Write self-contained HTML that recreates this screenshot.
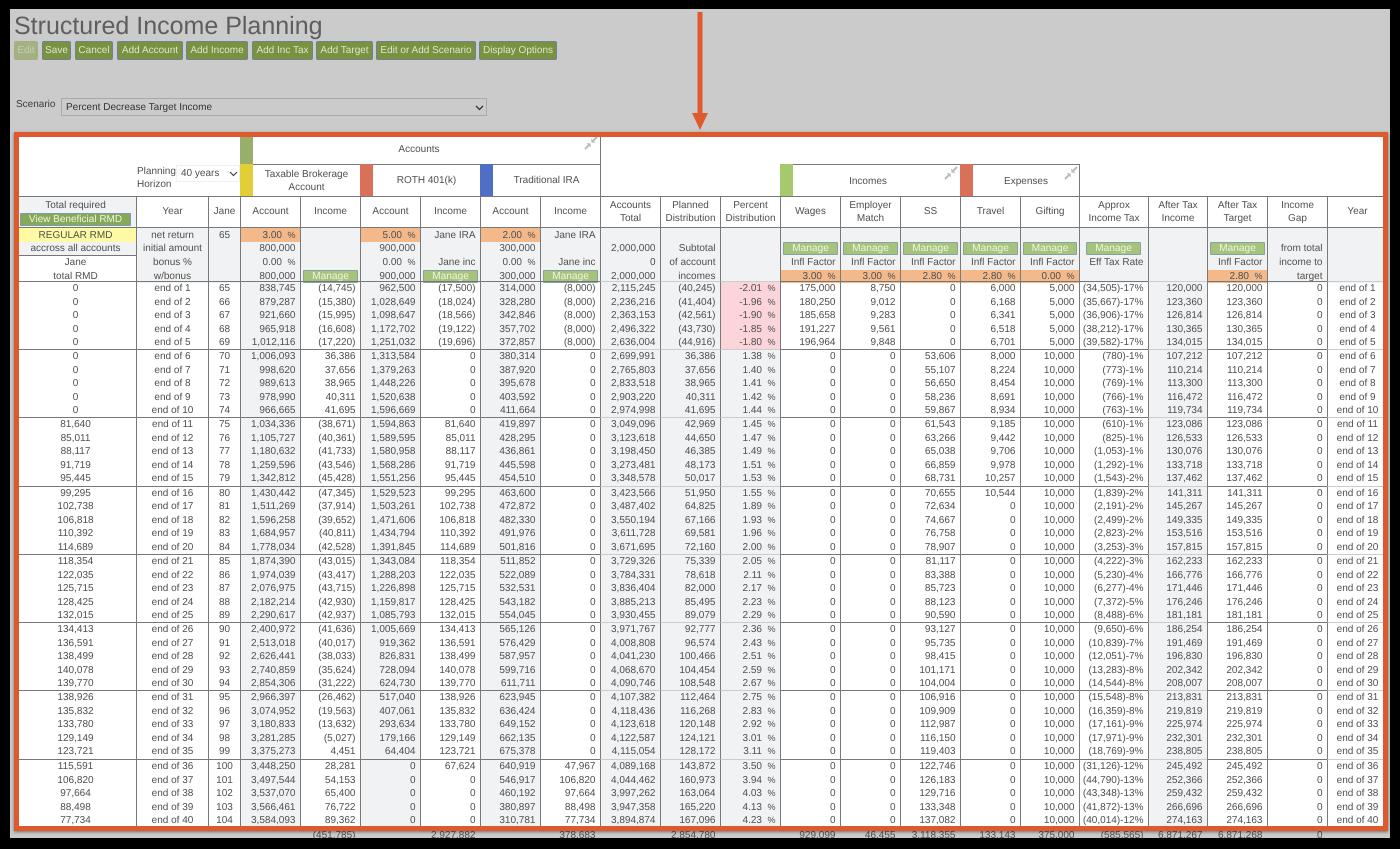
<!DOCTYPE html>
<html><head><meta charset="utf-8"><title>Structured Income Planning</title>
<style>
html,body{margin:0;padding:0;background:#000;width:1400px;height:849px;overflow:hidden}
body{position:relative;font-family:"Liberation Sans",sans-serif;font-size:10px;color:#4f4f4f;text-rendering:geometricPrecision}
.a{position:absolute}
#page{position:absolute;left:0;top:0;width:1400px;height:849px;background:#cbcbcb;filter:blur(.25px)}
#frame{position:absolute;left:0;top:0;width:1400px;height:849px;box-sizing:border-box;border-style:solid;border-color:#000;border-width:9px 10px 11px 10px;z-index:9}
h1{position:absolute;left:14px;top:11px;margin:0;font-weight:400;font-size:25px;line-height:30px;color:#5e5e5e;white-space:nowrap}
.b{position:absolute;top:41px;height:19px;box-sizing:border-box;background:#78923f;border:1px solid #6d8296;border-radius:2px;color:#dfe5cf;line-height:18px;text-align:center;white-space:nowrap}
.b.d{background:#a3b084;border-color:#a3b084;color:#c7d0b0}
#white{position:absolute;left:15px;top:133px;width:1372px;height:697px;background:#fff}
table{position:absolute;left:15px;width:1372px;table-layout:fixed;border-collapse:separate;border-spacing:0}
td{box-sizing:border-box;padding:0 4.5px 0 2px;height:13.6px;line-height:13.6px;white-space:nowrap;overflow:hidden;text-align:right;border-left:1px solid #7a7a7a}
td:nth-child(1){width:121px;border-left:0}
td:nth-child(2){width:72px}td:nth-child(3){width:32px}
td:nth-child(n+4){width:60px}
td:nth-child(17){width:59px}td:nth-child(18){width:69px}td:nth-child(19){width:59px}
td:nth-child(1),td:nth-child(2),td:nth-child(3),td:nth-child(22){text-align:center;padding:0}
td:nth-child(4),td:nth-child(6),td:nth-child(8),td:nth-child(10),td:nth-child(11),td:nth-child(12),td:nth-child(19){background:#f1f2f4}
td:nth-child(1){padding-right:0}
.g tr:first-child td{height:14.4px;border-top:1px solid #777}
.g tr:first-child td:nth-child(10),.g tr:first-child td:nth-child(11),.g tr:first-child td:nth-child(12),.g tr:first-child td:nth-child(19),.g tr:first-child td:nth-child(22){border-top-color:#ccc}
.p td:nth-child(12){background:#fbd5da}
i{font-style:normal;font-size:9px;margin-left:5.5px}
.c td{height:32px;line-height:12.5px;text-align:center;padding:1px 0 0;background:#fff;border-top:1px solid #777;border-bottom:1px solid #777;white-space:normal}
.h td{background:#f1f2f4;height:13px;line-height:12px;padding-top:1px}
.h tr:nth-child(3) td{height:14px;line-height:14px;padding-top:0}
.h tr:nth-child(4) td{line-height:13px;padding-top:0}
.h td.o{background:#f3b98a}
.h td.y{background:#fdfaa3}
.h td.w{background:#fff}
.h td.t{border-top:1px solid #777}
.h td.n,.h tr td.n{padding:0}
.m{box-sizing:border-box;height:13px;line-height:12px;margin:0 2px;background:#a5c37a;border:1px solid #88a2a6;border-radius:1px;color:#eff5e3;text-align:center;font-size:10.2px}
.s td{border:0!important;background:none!important;height:14px;line-height:14px}
.l{position:absolute;background:#777}
.t{position:absolute;text-align:center;line-height:12.5px}
#box{position:absolute;left:14px;top:132px;width:1374px;height:699px;box-sizing:border-box;border:5px solid #de5a2e;box-shadow:0 1px 3px rgba(0,0,0,.45);z-index:5}
</style></head><body>
<div id="page">
<h1>Structured Income Planning</h1>
<div class="b d" style="left:14px;width:24px">Edit</div>
<div class="b" style="left:42px;width:29px">Save</div>
<div class="b" style="left:75px;width:38px">Cancel</div>
<div class="b" style="left:117px;width:66px">Add Account</div>
<div class="b" style="left:186px;width:62px">Add Income</div>
<div class="b" style="left:252px;width:61px">Add Inc Tax</div>
<div class="b" style="left:316px;width:57px">Add Target</div>
<div class="b" style="left:376px;width:100px">Edit or Add Scenario</div>
<div class="b" style="left:479px;width:78px">Display Options</div>

<div class="a" style="left:16px;top:98px;line-height:13px;color:#3a3a3a">Scenario</div>
<div class="a" style="left:61px;top:98px;width:426px;height:18px;box-sizing:border-box;border:1px solid #aaa;line-height:17px;padding-left:4px;color:#333">Percent Decrease Target Income
<svg class="a" style="left:413px;top:6px" width="9" height="6" viewBox="0 0 9 6"><path d="M1 1l3.5 3.5L8 1" fill="none" stroke="#333" stroke-width="1.3"/></svg></div>

<svg class="a" style="left:685px;top:8px;z-index:6" width="30" height="124" viewBox="0 0 30 124"><path d="M12.5 4h5v102h-5z" fill="#de5a2e"/><path d="M7 105h16l-8 17z" fill="#de5a2e"/></svg>

<div id="white"></div>

<!-- top header -->
<div class="l" style="left:253px;top:164px;width:347px;height:1px"></div>
<div class="l" style="left:600px;top:137px;width:1px;height:59px"></div>
<div class="l" style="left:780px;top:164px;width:299px;height:1px"></div>
<div class="l" style="left:1079px;top:164px;width:1px;height:32px"></div>
<div class="a" style="left:240px;top:137px;width:13px;height:27px;background:#9aae6b"></div>
<div class="a" style="left:240px;top:164px;width:13px;height:32px;background:#e2cf37"></div>
<div class="a" style="left:360px;top:164px;width:13px;height:32px;background:#d9705a"></div>
<div class="a" style="left:480px;top:164px;width:13px;height:32px;background:#4f6fc4"></div>
<div class="a" style="left:780px;top:164px;width:13px;height:32px;background:#a5c96c"></div>
<div class="a" style="left:960px;top:164px;width:13px;height:32px;background:#d9705a"></div>
<div class="t" style="left:253px;top:144px;width:332px">Accounts</div>
<div class="t" style="left:253px;top:169px;width:107px">Taxable Brokerage<br>Account</div>
<div class="t" style="left:373px;top:175px;width:107px">ROTH 401(k)</div>
<div class="t" style="left:493px;top:175px;width:107px">Traditional IRA</div>
<div class="t" style="left:793px;top:176px;width:150px">Incomes</div>
<div class="t" style="left:973px;top:176px;width:106px">Expenses</div>
<div class="t" style="left:137px;top:165px;text-align:left;width:40px;padding-top:1px">Planning<br>Horizon</div>
<div class="a" style="left:176px;top:165px;width:64px;height:17px;box-sizing:border-box;border:1px solid #f0f0f0;background:#fff;line-height:15px;padding-left:4px">40 years
<svg class="a" style="left:52px;top:5px" width="9" height="6" viewBox="0 0 9 6"><path d="M1 1l3.500 3.500L8 1" fill="none" stroke="#444" stroke-width="1.2"/></svg></div>
<svg class="a" style="left:584px;top:136px" width="14" height="14" viewBox="0 0 14 14"><path d="M1 13l4.500-4.500M13 1L8.500 5.500" stroke="#bbb" stroke-width="2" fill="none"/><path d="M6.500 7.500L2.500 7l4.500 4.500zM7.500 6.500l4 .5L7 2.500z" fill="#bbb"/></svg>
<svg class="a" style="left:944px;top:166px" width="14" height="14" viewBox="0 0 14 14"><path d="M1 13l4.500-4.500M13 1L8.500 5.500" stroke="#bbb" stroke-width="2" fill="none"/><path d="M6.500 7.500L2.500 7l4.500 4.500zM7.500 6.500l4 .5L7 2.500z" fill="#bbb"/></svg>
<svg class="a" style="left:1064px;top:166px" width="14" height="14" viewBox="0 0 14 14"><path d="M1 13l4.500-4.500M13 1L8.500 5.500" stroke="#bbb" stroke-width="2" fill="none"/><path d="M6.500 7.500L2.500 7l4.500 4.500zM7.500 6.500l4 .5L7 2.500z" fill="#bbb"/></svg>

<!-- column headings -->
<table class="c" style="top:196px"><tr><td><td>Year<td>Jane<td>Account<td>Income<td>Account<td>Income<td>Account<td>Income<td>Accounts<br>Total<td>Planned<br>Distribution<td>Percent<br>Distribution<td>Wages<td>Employer<br>Match<td>SS<td>Travel<td>Gifting<td>Approx<br>Income Tax<td>After Tax<br>Income<td>After Tax<br>Target<td>Income<br>Gap<td>Year</tr></table>
<div class="a" style="left:15px;top:197px;width:121px;height:16px;background:#f1f2f4;text-align:center;line-height:17px">Total required</div>
<div class="a" style="left:15px;top:213px;width:121px;height:14px;background:#f1f2f4"></div>
<div class="a" style="left:20px;top:213px;width:111px;height:13px;box-sizing:border-box;background:#86a957;border:1px solid #7d9ab0;color:#eff5e3;text-align:center;line-height:12px;font-size:10px;border-radius:1px">View Beneficial RMD</div>

<!-- parameter rows -->
<table class="h" style="top:228px">
<tr><td class="y">REGULAR RMD<td>net return<td>65<td class="o">3.00<i>%</i><td><td class="o">5.00<i>%</i><td>Jane IRA<td class="o">2.00<i>%</i><td>Jane IRA<td><td><td><td><td><td><td><td><td><td><td><td><td></tr>
<tr><td>accross all accounts<td>initial amount<td><td>800,000<td><td>900,000<td><td>300,000<td><td>2,000,000<td>Subtotal<td><td class="n"><div class="m">Manage</div><td class="n"><div class="m">Manage</div><td class="n"><div class="m">Manage</div><td class="n"><div class="m">Manage</div><td class="n"><div class="m">Manage</div><td class="n"><div class="m" style="margin:0 7px 0 6px">Manage</div><td><td class="n"><div class="m">Manage</div><td>from total<td></tr>
<tr><td class="w t">Jane<td>bonus %<td><td>0.00<i>%</i><td><td>0.00<i>%</i><td>Jane inc<td>0.00<i>%</i><td>Jane inc<td>0<td>of account<td><td>Infl Factor<td>Infl Factor<td>Infl Factor<td>Infl Factor<td>Infl Factor<td>Eff Tax Rate<td><td>Infl Factor<td>income to<td></tr>
<tr><td class="w">total RMD<td>w/bonus<td><td>800,000<td class="n"><div class="m">Manage</div><td>900,000<td class="n"><div class="m">Manage</div><td>300,000<td class="n"><div class="m">Manage</div><td>2,000,000<td>incomes<td><td class="o">3.00<i>%</i><td class="o">3.00<i>%</i><td class="o">2.80<i>%</i><td class="o">2.80<i>%</i><td class="o">0.00<i>%</i><td><td><td class="o">2.80<i>%</i><td>target<td></tr>
</table>

<!-- data -->
<table class="g p" style="top:281px">
<tr><td>0<td>end of 1<td>65<td>838,745<td>(14,745)<td>962,500<td>(17,500)<td>314,000<td>(8,000)<td>2,115,245<td>(40,245)<td>-2.01<i>%</i><td>175,000<td>8,750<td>0<td>6,000<td>5,000<td>(34,505)-17%<td>120,000<td>120,000<td>0<td>end of 1</tr>
<tr><td>0<td>end of 2<td>66<td>879,287<td>(15,380)<td>1,028,649<td>(18,024)<td>328,280<td>(8,000)<td>2,236,216<td>(41,404)<td>-1.96<i>%</i><td>180,250<td>9,012<td>0<td>6,168<td>5,000<td>(35,667)-17%<td>123,360<td>123,360<td>0<td>end of 2</tr>
<tr><td>0<td>end of 3<td>67<td>921,660<td>(15,995)<td>1,098,647<td>(18,566)<td>342,846<td>(8,000)<td>2,363,153<td>(42,561)<td>-1.90<i>%</i><td>185,658<td>9,283<td>0<td>6,341<td>5,000<td>(36,906)-17%<td>126,814<td>126,814<td>0<td>end of 3</tr>
<tr><td>0<td>end of 4<td>68<td>965,918<td>(16,608)<td>1,172,702<td>(19,122)<td>357,702<td>(8,000)<td>2,496,322<td>(43,730)<td>-1.85<i>%</i><td>191,227<td>9,561<td>0<td>6,518<td>5,000<td>(38,212)-17%<td>130,365<td>130,365<td>0<td>end of 4</tr>
<tr><td>0<td>end of 5<td>69<td>1,012,116<td>(17,220)<td>1,251,032<td>(19,696)<td>372,857<td>(8,000)<td>2,636,004<td>(44,916)<td>-1.80<i>%</i><td>196,964<td>9,848<td>0<td>6,701<td>5,000<td>(39,582)-17%<td>134,015<td>134,015<td>0<td>end of 5</tr>
</table>
<table class="g" style="top:349px">
<tr><td>0<td>end of 6<td>70<td>1,006,093<td>36,386<td>1,313,584<td>0<td>380,314<td>0<td>2,699,991<td>36,386<td>1.38<i>%</i><td>0<td>0<td>53,606<td>8,000<td>10,000<td>(780)-1%<td>107,212<td>107,212<td>0<td>end of 6</tr>
<tr><td>0<td>end of 7<td>71<td>998,620<td>37,656<td>1,379,263<td>0<td>387,920<td>0<td>2,765,803<td>37,656<td>1.40<i>%</i><td>0<td>0<td>55,107<td>8,224<td>10,000<td>(773)-1%<td>110,214<td>110,214<td>0<td>end of 7</tr>
<tr><td>0<td>end of 8<td>72<td>989,613<td>38,965<td>1,448,226<td>0<td>395,678<td>0<td>2,833,518<td>38,965<td>1.41<i>%</i><td>0<td>0<td>56,650<td>8,454<td>10,000<td>(769)-1%<td>113,300<td>113,300<td>0<td>end of 8</tr>
<tr><td>0<td>end of 9<td>73<td>978,990<td>40,311<td>1,520,638<td>0<td>403,592<td>0<td>2,903,220<td>40,311<td>1.42<i>%</i><td>0<td>0<td>58,236<td>8,691<td>10,000<td>(766)-1%<td>116,472<td>116,472<td>0<td>end of 9</tr>
<tr><td>0<td>end of 10<td>74<td>966,665<td>41,695<td>1,596,669<td>0<td>411,664<td>0<td>2,974,998<td>41,695<td>1.44<i>%</i><td>0<td>0<td>59,867<td>8,934<td>10,000<td>(763)-1%<td>119,734<td>119,734<td>0<td>end of 10</tr>
</table>
<table class="g" style="top:417px">
<tr><td>81,640<td>end of 11<td>75<td>1,034,336<td>(38,671)<td>1,594,863<td>81,640<td>419,897<td>0<td>3,049,096<td>42,969<td>1.45<i>%</i><td>0<td>0<td>61,543<td>9,185<td>10,000<td>(610)-1%<td>123,086<td>123,086<td>0<td>end of 11</tr>
<tr><td>85,011<td>end of 12<td>76<td>1,105,727<td>(40,361)<td>1,589,595<td>85,011<td>428,295<td>0<td>3,123,618<td>44,650<td>1.47<i>%</i><td>0<td>0<td>63,266<td>9,442<td>10,000<td>(825)-1%<td>126,533<td>126,533<td>0<td>end of 12</tr>
<tr><td>88,117<td>end of 13<td>77<td>1,180,632<td>(41,733)<td>1,580,958<td>88,117<td>436,861<td>0<td>3,198,450<td>46,385<td>1.49<i>%</i><td>0<td>0<td>65,038<td>9,706<td>10,000<td>(1,053)-1%<td>130,076<td>130,076<td>0<td>end of 13</tr>
<tr><td>91,719<td>end of 14<td>78<td>1,259,596<td>(43,546)<td>1,568,286<td>91,719<td>445,598<td>0<td>3,273,481<td>48,173<td>1.51<i>%</i><td>0<td>0<td>66,859<td>9,978<td>10,000<td>(1,292)-1%<td>133,718<td>133,718<td>0<td>end of 14</tr>
<tr><td>95,445<td>end of 15<td>79<td>1,342,812<td>(45,428)<td>1,551,256<td>95,445<td>454,510<td>0<td>3,348,578<td>50,017<td>1.53<i>%</i><td>0<td>0<td>68,731<td>10,257<td>10,000<td>(1,543)-2%<td>137,462<td>137,462<td>0<td>end of 15</tr>
</table>
<table class="g" style="top:485.500px">
<tr><td>99,295<td>end of 16<td>80<td>1,430,442<td>(47,345)<td>1,529,523<td>99,295<td>463,600<td>0<td>3,423,566<td>51,950<td>1.55<i>%</i><td>0<td>0<td>70,655<td>10,544<td>10,000<td>(1,839)-2%<td>141,311<td>141,311<td>0<td>end of 16</tr>
<tr><td>102,738<td>end of 17<td>81<td>1,511,269<td>(37,914)<td>1,503,261<td>102,738<td>472,872<td>0<td>3,487,402<td>64,825<td>1.89<i>%</i><td>0<td>0<td>72,634<td>0<td>10,000<td>(2,191)-2%<td>145,267<td>145,267<td>0<td>end of 17</tr>
<tr><td>106,818<td>end of 18<td>82<td>1,596,258<td>(39,652)<td>1,471,606<td>106,818<td>482,330<td>0<td>3,550,194<td>67,166<td>1.93<i>%</i><td>0<td>0<td>74,667<td>0<td>10,000<td>(2,499)-2%<td>149,335<td>149,335<td>0<td>end of 18</tr>
<tr><td>110,392<td>end of 19<td>83<td>1,684,957<td>(40,811)<td>1,434,794<td>110,392<td>491,976<td>0<td>3,611,728<td>69,581<td>1.96<i>%</i><td>0<td>0<td>76,758<td>0<td>10,000<td>(2,823)-2%<td>153,516<td>153,516<td>0<td>end of 19</tr>
<tr><td>114,689<td>end of 20<td>84<td>1,778,034<td>(42,528)<td>1,391,845<td>114,689<td>501,816<td>0<td>3,671,695<td>72,160<td>2.00<i>%</i><td>0<td>0<td>78,907<td>0<td>10,000<td>(3,253)-3%<td>157,815<td>157,815<td>0<td>end of 20</tr>
</table>
<table class="g" style="top:554px">
<tr><td>118,354<td>end of 21<td>85<td>1,874,390<td>(43,015)<td>1,343,084<td>118,354<td>511,852<td>0<td>3,729,326<td>75,339<td>2.05<i>%</i><td>0<td>0<td>81,117<td>0<td>10,000<td>(4,222)-3%<td>162,233<td>162,233<td>0<td>end of 21</tr>
<tr><td>122,035<td>end of 22<td>86<td>1,974,039<td>(43,417)<td>1,288,203<td>122,035<td>522,089<td>0<td>3,784,331<td>78,618<td>2.11<i>%</i><td>0<td>0<td>83,388<td>0<td>10,000<td>(5,230)-4%<td>166,776<td>166,776<td>0<td>end of 22</tr>
<tr><td>125,715<td>end of 23<td>87<td>2,076,975<td>(43,715)<td>1,226,898<td>125,715<td>532,531<td>0<td>3,836,404<td>82,000<td>2.17<i>%</i><td>0<td>0<td>85,723<td>0<td>10,000<td>(6,277)-4%<td>171,446<td>171,446<td>0<td>end of 23</tr>
<tr><td>128,425<td>end of 24<td>88<td>2,182,214<td>(42,930)<td>1,159,817<td>128,425<td>543,182<td>0<td>3,885,213<td>85,495<td>2.23<i>%</i><td>0<td>0<td>88,123<td>0<td>10,000<td>(7,372)-5%<td>176,246<td>176,246<td>0<td>end of 24</tr>
<tr><td>132,015<td>end of 25<td>89<td>2,290,617<td>(42,937)<td>1,085,793<td>132,015<td>554,045<td>0<td>3,930,455<td>89,079<td>2.29<i>%</i><td>0<td>0<td>90,590<td>0<td>10,000<td>(8,488)-6%<td>181,181<td>181,181<td>0<td>end of 25</tr>
</table>
<table class="g" style="top:622px">
<tr><td>134,413<td>end of 26<td>90<td>2,400,972<td>(41,636)<td>1,005,669<td>134,413<td>565,126<td>0<td>3,971,767<td>92,777<td>2.36<i>%</i><td>0<td>0<td>93,127<td>0<td>10,000<td>(9,650)-6%<td>186,254<td>186,254<td>0<td>end of 26</tr>
<tr><td>136,591<td>end of 27<td>91<td>2,513,018<td>(40,017)<td>919,362<td>136,591<td>576,429<td>0<td>4,008,808<td>96,574<td>2.43<i>%</i><td>0<td>0<td>95,735<td>0<td>10,000<td>(10,839)-7%<td>191,469<td>191,469<td>0<td>end of 27</tr>
<tr><td>138,499<td>end of 28<td>92<td>2,626,441<td>(38,033)<td>826,831<td>138,499<td>587,957<td>0<td>4,041,230<td>100,466<td>2.51<i>%</i><td>0<td>0<td>98,415<td>0<td>10,000<td>(12,051)-7%<td>196,830<td>196,830<td>0<td>end of 28</tr>
<tr><td>140,078<td>end of 29<td>93<td>2,740,859<td>(35,624)<td>728,094<td>140,078<td>599,716<td>0<td>4,068,670<td>104,454<td>2.59<i>%</i><td>0<td>0<td>101,171<td>0<td>10,000<td>(13,283)-8%<td>202,342<td>202,342<td>0<td>end of 29</tr>
<tr><td>139,770<td>end of 30<td>94<td>2,854,306<td>(31,222)<td>624,730<td>139,770<td>611,711<td>0<td>4,090,746<td>108,548<td>2.67<i>%</i><td>0<td>0<td>104,004<td>0<td>10,000<td>(14,544)-8%<td>208,007<td>208,007<td>0<td>end of 30</tr>
</table>
<table class="g" style="top:690px">
<tr><td>138,926<td>end of 31<td>95<td>2,966,397<td>(26,462)<td>517,040<td>138,926<td>623,945<td>0<td>4,107,382<td>112,464<td>2.75<i>%</i><td>0<td>0<td>106,916<td>0<td>10,000<td>(15,548)-8%<td>213,831<td>213,831<td>0<td>end of 31</tr>
<tr><td>135,832<td>end of 32<td>96<td>3,074,952<td>(19,563)<td>407,061<td>135,832<td>636,424<td>0<td>4,118,436<td>116,268<td>2.83<i>%</i><td>0<td>0<td>109,909<td>0<td>10,000<td>(16,359)-8%<td>219,819<td>219,819<td>0<td>end of 32</tr>
<tr><td>133,780<td>end of 33<td>97<td>3,180,833<td>(13,632)<td>293,634<td>133,780<td>649,152<td>0<td>4,123,618<td>120,148<td>2.92<i>%</i><td>0<td>0<td>112,987<td>0<td>10,000<td>(17,161)-9%<td>225,974<td>225,974<td>0<td>end of 33</tr>
<tr><td>129,149<td>end of 34<td>98<td>3,281,285<td>(5,027)<td>179,166<td>129,149<td>662,135<td>0<td>4,122,587<td>124,121<td>3.01<i>%</i><td>0<td>0<td>116,150<td>0<td>10,000<td>(17,971)-9%<td>232,301<td>232,301<td>0<td>end of 34</tr>
<tr><td>123,721<td>end of 35<td>99<td>3,375,273<td>4,451<td>64,404<td>123,721<td>675,378<td>0<td>4,115,054<td>128,172<td>3.11<i>%</i><td>0<td>0<td>119,403<td>0<td>10,000<td>(18,769)-9%<td>238,805<td>238,805<td>0<td>end of 35</tr>
</table>
<table class="g" style="top:759px">
<tr><td>115,591<td>end of 36<td>100<td>3,448,250<td>28,281<td>0<td>67,624<td>640,919<td>47,967<td>4,089,168<td>143,872<td>3.50<i>%</i><td>0<td>0<td>122,746<td>0<td>10,000<td>(31,126)-12%<td>245,492<td>245,492<td>0<td>end of 36</tr>
<tr><td>106,820<td>end of 37<td>101<td>3,497,544<td>54,153<td>0<td>0<td>546,917<td>106,820<td>4,044,462<td>160,973<td>3.94<i>%</i><td>0<td>0<td>126,183<td>0<td>10,000<td>(44,790)-13%<td>252,366<td>252,366<td>0<td>end of 37</tr>
<tr><td>97,664<td>end of 38<td>102<td>3,537,070<td>65,400<td>0<td>0<td>460,192<td>97,664<td>3,997,262<td>163,064<td>4.03<i>%</i><td>0<td>0<td>129,716<td>0<td>10,000<td>(43,348)-13%<td>259,432<td>259,432<td>0<td>end of 38</tr>
<tr><td>88,498<td>end of 39<td>103<td>3,566,461<td>76,722<td>0<td>0<td>380,897<td>88,498<td>3,947,358<td>165,220<td>4.13<i>%</i><td>0<td>0<td>133,348<td>0<td>10,000<td>(41,872)-13%<td>266,696<td>266,696<td>0<td>end of 39</tr>
<tr><td>77,734<td>end of 40<td>104<td>3,584,093<td>89,362<td>0<td>0<td>310,781<td>77,734<td>3,894,874<td>167,096<td>4.23<i>%</i><td>0<td>0<td>137,082<td>0<td>10,000<td>(40,014)-12%<td>274,163<td>274,163<td>0<td>end of 40</tr>
</table>

<!-- totals, mostly hidden -->
<table class="s" style="top:829px;z-index:1"><tr><td><td><td><td><td>(451,785)<td><td>2,927,882<td><td>378,683<td><td>2,854,780<td><td>929,099<td>46,455<td>3,118,355<td>133,143<td>375,000<td>(585,565)<td>6,871,267<td>6,871,268<td>0<td></tr></table>

<div id="box"></div>
</div>
<div id="frame"></div>
</body></html>
